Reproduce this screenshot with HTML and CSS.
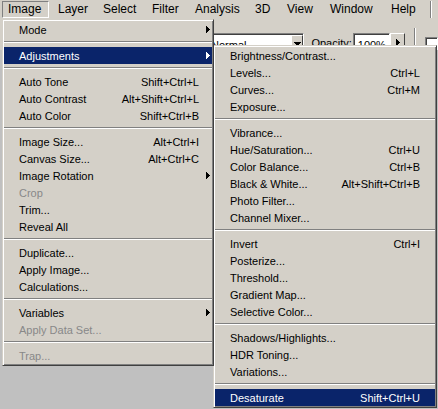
FILE: index.html
```html
<!DOCTYPE html>
<html>
<head>
<meta charset="utf-8">
<link rel="stylesheet" href="styles.css">
</head>
<body>
<div class="menubar">
  <div class="mb-item pressed">Image</div>
  <div class="mb-item">Layer</div>
  <div class="mb-item">Select</div>
  <div class="mb-item">Filter</div>
  <div class="mb-item">Analysis</div>
  <div class="mb-item">3D</div>
  <div class="mb-item">View</div>
  <div class="mb-item">Window</div>
  <div class="mb-item">Help</div>
  <div class="mb-sep"></div>
</div>

<div class="options">
  <div class="field blend">
    <span class="field-text">Normal</span>
    <span class="btn dd-btn"><svg class="down" viewBox="0 0 7 4"><path d="M0 0h7v1H0zM1 1h5v1H1zM2 2h3v1H2zM3 3h1v1H3z"/></svg></span>
  </div>
  <span class="opt-label">Opacity:</span>
  <div class="field opacity"><span class="field-text">100%</span></div>
  <span class="btn spin-btn"><svg class="right" viewBox="0 0 4 7"><path d="M0 0h1v7H0zM1 1h1v5H1zM2 2h1v3H2zM3 3h1v1H3z"/></svg></span>
  <span class="vsep"></span>
  <span class="checkbox"></span>
</div>

<div class="workspace"></div>

<div class="menu menu-main">
  <div class="item"><span>Mode</span><svg class="arrow" viewBox="0 0 4 7"><path d="M0 0h1v7H0zM1 1h1v5H1zM2 2h1v3H2zM3 3h1v1H3z"/></svg></div>
  <div class="sep"></div>
  <div class="item active"><span>Adjustments</span><svg class="arrow" viewBox="0 0 4 7"><path d="M0 0h1v7H0zM1 1h1v5H1zM2 2h1v3H2zM3 3h1v1H3z"/></svg></div>
  <div class="sep"></div>
  <div class="item"><span>Auto Tone</span><span class="key">Shift+Ctrl+L</span></div>
  <div class="item"><span>Auto Contrast</span><span class="key">Alt+Shift+Ctrl+L</span></div>
  <div class="item"><span>Auto Color</span><span class="key">Shift+Ctrl+B</span></div>
  <div class="sep"></div>
  <div class="item"><span>Image Size...</span><span class="key">Alt+Ctrl+I</span></div>
  <div class="item"><span>Canvas Size...</span><span class="key">Alt+Ctrl+C</span></div>
  <div class="item"><span>Image Rotation</span><svg class="arrow" viewBox="0 0 4 7"><path d="M0 0h1v7H0zM1 1h1v5H1zM2 2h1v3H2zM3 3h1v1H3z"/></svg></div>
  <div class="item disabled"><span>Crop</span></div>
  <div class="item"><span>Trim...</span></div>
  <div class="item"><span>Reveal All</span></div>
  <div class="sep"></div>
  <div class="item"><span>Duplicate...</span></div>
  <div class="item"><span>Apply Image...</span></div>
  <div class="item"><span>Calculations...</span></div>
  <div class="sep"></div>
  <div class="item"><span>Variables</span><svg class="arrow" viewBox="0 0 4 7"><path d="M0 0h1v7H0zM1 1h1v5H1zM2 2h1v3H2zM3 3h1v1H3z"/></svg></div>
  <div class="item disabled"><span>Apply Data Set...</span></div>
  <div class="sep"></div>
  <div class="item disabled"><span>Trap...</span></div>
</div>

<div class="menu menu-sub">
  <div class="item"><span>Brightness/Contrast...</span></div>
  <div class="item"><span>Levels...</span><span class="key">Ctrl+L</span></div>
  <div class="item"><span>Curves...</span><span class="key">Ctrl+M</span></div>
  <div class="item"><span>Exposure...</span></div>
  <div class="sep"></div>
  <div class="item"><span>Vibrance...</span></div>
  <div class="item"><span>Hue/Saturation...</span><span class="key">Ctrl+U</span></div>
  <div class="item"><span>Color Balance...</span><span class="key">Ctrl+B</span></div>
  <div class="item"><span>Black &amp; White...</span><span class="key">Alt+Shift+Ctrl+B</span></div>
  <div class="item"><span>Photo Filter...</span></div>
  <div class="item"><span>Channel Mixer...</span></div>
  <div class="sep"></div>
  <div class="item"><span>Invert</span><span class="key">Ctrl+I</span></div>
  <div class="item"><span>Posterize...</span></div>
  <div class="item"><span>Threshold...</span></div>
  <div class="item"><span>Gradient Map...</span></div>
  <div class="item"><span>Selective Color...</span></div>
  <div class="sep"></div>
  <div class="item"><span>Shadows/Highlights...</span></div>
  <div class="item"><span>HDR Toning...</span></div>
  <div class="item"><span>Variations...</span></div>
  <div class="sep"></div>
  <div class="item active"><span>Desaturate</span><span class="key">Shift+Ctrl+U</span></div>
</div>
</body>
</html>
```

FILE: styles.css
```css
html, body {
  margin: 0;
  padding: 0;
}

body {
  width: 438px;
  height: 409px;
  overflow: hidden;
  position: relative;
  background: #c0c0c0;
  color: #000;
  font-family: "Liberation Sans", Arial, sans-serif;
}

/* ---------- menu bar ---------- */
.menubar {
  display: grid;
  grid-template-columns: 50px 45px 49px 43px 60px 32px 43px 61px 45px 2px;
  height: 19px;
  padding-left: 2px;
  background: #d4d0c8;
  font-size: 12px;
}

.mb-item {
  margin-top: 1px;
  height: 17px;
  box-sizing: border-box;
  padding-left: 6px;
  line-height: 17px;
  white-space: nowrap;
}

.mb-item.pressed {
  width: 47px;
  border: 1px solid;
  border-color: #808080 #fff #fff #808080;
  padding-left: 5px;
  line-height: 15px;
}

.mb-sep {
  margin-top: 1px;
  height: 17px;
  box-sizing: border-box;
  border-left: 1px solid #808080;
  border-right: 1px solid #fff;
}

/* ---------- options bar ---------- */
.options {
  display: flex;
  align-items: flex-start;
  height: 31px;
  box-sizing: border-box;
  padding-top: 14px;
  background: #d4d0c8;
  font-size: 11px;
  overflow: hidden;
}

.field {
  display: flex;
  height: 20px;
  box-sizing: border-box;
  border: 1px solid;
  border-color: #808080 #fff #fff #808080;
  box-shadow: inset 1px 1px #404040;
  background: #fff;
}

.field-text {
  padding: 5px 0 0 4px;
  line-height: 13px;
}

.blend {
  margin-left: 206px;
  width: 100px;
}

.btn {
  display: flex;
  justify-content: center;
  box-sizing: border-box;
  background: #d4d0c8;
  border: 1px solid;
  border-color: #fff #404040 #404040 #fff;
}

.dd-btn {
  margin-left: auto;
  margin-top: 1px;
  width: 12px;
  height: 17px;
  padding-top: 6px;
}

.down {
  width: 7px;
  height: 4px;
  fill: #000;
}

.opt-label {
  margin-left: 7px;
  margin-top: 4px;
  width: 42px;
  line-height: 13px;
}

.opacity {
  width: 38px;
}

.spin-btn {
  width: 15px;
  height: 20px;
  padding-top: 5px;
}

.right {
  width: 4px;
  height: 7px;
  fill: #000;
}

.vsep {
  margin-left: 9px;
  margin-top: -5px;
  width: 2px;
  height: 30px;
  box-sizing: border-box;
  border-left: 1px solid #808080;
  border-right: 1px solid #fff;
}

.checkbox {
  margin-left: 9px;
  margin-top: 4px;
  flex: none;
  width: 13px;
  height: 13px;
  box-sizing: border-box;
  border: 1px solid;
  border-color: #808080 #fff #fff #808080;
  box-shadow: inset 1px 1px #404040;
  background: #fff;
}

.workspace {
  height: 359px;
  background: #c0c0c0;
}

/* ---------- drop-down menus ---------- */
.menu {
  position: absolute;
  background: #d4d0c8;
  border: 1px solid;
  border-color: #d4d0c8 #404040 #404040 #d4d0c8;
  padding: 1px;
  box-shadow: inset 1px 1px #fff, inset -1px -1px #808080;
  font-size: 11px;
}

.menu-main {
  left: 2px;
  top: 19px;
  width: 208px;
  z-index: 2;
}

.menu-sub {
  left: 213px;
  top: 45px;
  width: 220px;
  z-index: 1;
}

.item {
  position: relative;
  display: flex;
  height: 17px;
  line-height: 19px;
  padding: 0 13px 0 15px;
  white-space: nowrap;
}

.menu-sub .item {
  padding-right: 15px;
}

.key {
  margin-left: auto;
}

.item.active {
  background: #0a246a;
  color: #fff;
}

.item.disabled {
  color: #888;
}

.arrow {
  position: absolute;
  right: 2px;
  top: 5px;
  width: 4px;
  height: 7px;
  fill: currentColor;
}

.sep {
  height: 9px;
  box-sizing: border-box;
  padding-top: 3px;
}

.sep::before {
  content: "";
  display: block;
  border-top: 1px solid #808080;
  border-bottom: 1px solid #fff;
}
```
